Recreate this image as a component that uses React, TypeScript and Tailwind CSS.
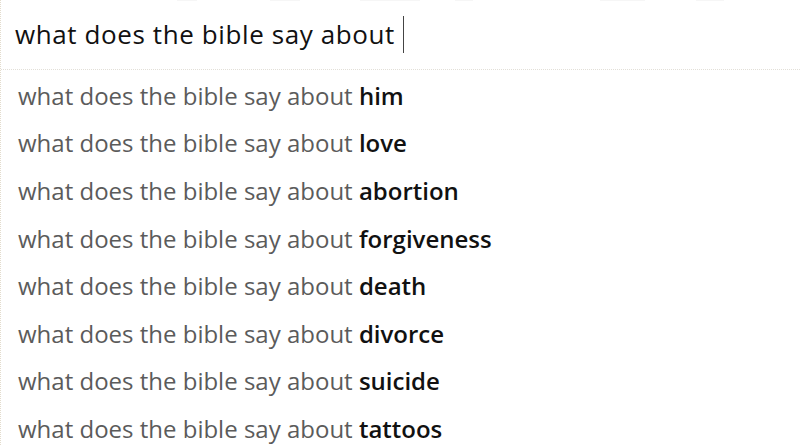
import React from "react";

const items = ["him", "love", "abortion", "forgiveness", "death", "divorce", "suicide", "tattoos"];

export default function App() {
  return (
    <div className="relative w-[800px] h-[445px] overflow-hidden bg-white" style={{ fontFamily: '"Open Sans", "Noto Sans", sans-serif' }}>
      <div className="absolute top-0 left-0 w-full h-[1px]">
        <div className="absolute left-[177px] w-[20px] h-[1px] bg-[#f6f6f6]" />
        <div className="absolute left-[270px] w-[30px] h-[1px] bg-[#f6f6f6]" />
        <div className="absolute left-[360px] w-[60px] h-[1px] bg-[#f6f6f6]" />
        <div className="absolute left-[455px] w-[18px] h-[1px] bg-[#f6f6f6]" />
        <div className="absolute left-[600px] w-[45px] h-[1px] bg-[#f6f6f6]" />
        <div className="absolute left-[696px] w-[28px] h-[1px] bg-[#f6f6f6]" />
      </div>
      <div className="flex flex-col h-full border-l border-dotted border-[#e3dccd]">
        <div className="h-[69px] shrink-0 flex items-center pl-[14px]">
          <span className="text-[26px] tracking-[0.6px] text-[#111] whitespace-pre">what does the bible say about</span>
          <span className="w-[1px] h-[37px] bg-[#444] ml-[8px]" />
        </div>
        <div className="h-[3px] shrink-0 border-t border-dotted border-[#e2dfd8]" />
        <div className="flex flex-col shrink-0">
          {items.map((it) => (
            <div key={it} className="h-[47.6px] shrink-0 flex items-center pl-[17px] text-[24px] text-[#5b5b5b] whitespace-pre">
              <span>what does the bible say about </span>
              <span className="font-semibold text-[#111]">{it}</span>
            </div>
          ))}
        </div>
      </div>
    </div>
  );
}
